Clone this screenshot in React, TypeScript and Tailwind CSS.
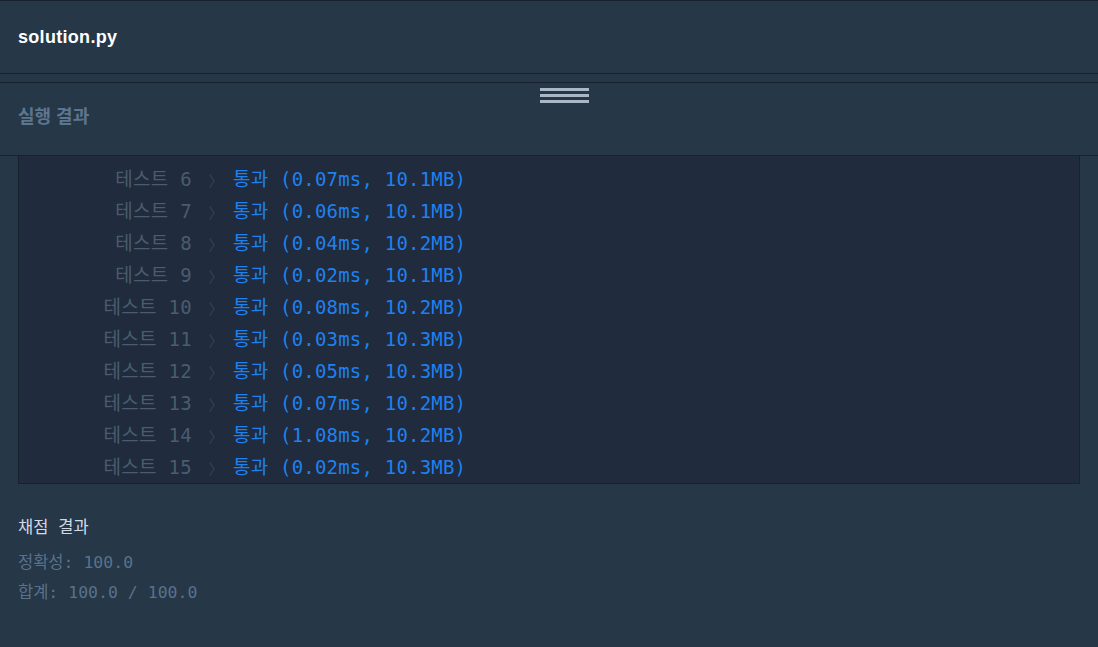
import React from "react";

const rows = [
  { n: 6, r: "(0.07ms, 10.1MB)" },
  { n: 7, r: "(0.06ms, 10.1MB)" },
  { n: 8, r: "(0.04ms, 10.2MB)" },
  { n: 9, r: "(0.02ms, 10.1MB)" },
  { n: 10, r: "(0.08ms, 10.2MB)" },
  { n: 11, r: "(0.03ms, 10.3MB)" },
  { n: 12, r: "(0.05ms, 10.3MB)" },
  { n: 13, r: "(0.07ms, 10.2MB)" },
  { n: 14, r: "(1.08ms, 10.2MB)" },
  { n: 15, r: "(0.02ms, 10.3MB)" },
];

const mono = "font-['DejaVu_Sans_Mono','Noto_Sans_CJK_KR',monospace]";
const sans = "font-['Liberation_Sans','Noto_Sans_CJK_KR',sans-serif]";

const Chevron = () => (
  <svg width="6" height="14" viewBox="0 0 6 14" className="ml-[17px] mt-[3px] shrink-0">
    <path d="M0.8 0.5 L5 7 L0.8 13.5" fill="none" stroke="#2f3e50" strokeWidth="1.4" />
  </svg>
);

const App = () => {
  return (
    <div className={`w-[1098px] h-[647px] overflow-hidden bg-[#263747] ${sans}`}>
      {/* file tab */}
      <div className="h-[74px] border-t border-b border-[#18222f] flex items-center px-[18px]">
        <h1 className="text-white font-bold text-[18px] tracking-[0.3px]">solution.py</h1>
      </div>

      {/* resize handle + result header */}
      <div className="mt-[8px] border-t border-b border-[#18222f] h-[74px] relative flex items-center px-[18px]">
        <div className="absolute left-[540px] top-[5px] flex flex-col gap-[3.5px]">
          <div className="w-[49px] h-[2.5px] bg-[#aab7c4]" />
          <div className="w-[49px] h-[2.5px] bg-[#aab7c4]" />
          <div className="w-[49px] h-[2.5px] bg-[#aab7c4]" />
        </div>
        <h2 className="text-[#5d7690] font-bold text-[18px] -mt-[3px]">실행 결과</h2>
      </div>

      {/* console output */}
      <div className="mx-[18px] bg-[#202b3d] border-x border-b border-[#18222f] pt-[7px]">
        {rows.map((row) => (
          <div key={row.n} className={`h-[32px] flex items-center text-[19px] ${mono}`}>
            <span className="w-[173px] text-right text-[#4a5c6e] whitespace-pre tracking-[0.3px]">
              테스트 {row.n}
            </span>
            <Chevron />
            <span className="ml-[18px] text-[#1f80f0] whitespace-pre tracking-[0.2px]">
              통과 {row.r}
            </span>
          </div>
        ))}
      </div>

      {/* score */}
      <div className={`px-[18px] pt-[33px] ${mono}`}>
        <p className="text-[#d1dbe5] text-[16.5px] leading-[22px]">채점 결과</p>
        <p className="text-[#58728c] text-[16.5px] leading-[22px] mt-[13px]">정확성: 100.0</p>
        <p className="text-[#58728c] text-[16.5px] leading-[22px] mt-[8px]">합계: 100.0 / 100.0</p>
      </div>
    </div>
  );
};

export default App;
